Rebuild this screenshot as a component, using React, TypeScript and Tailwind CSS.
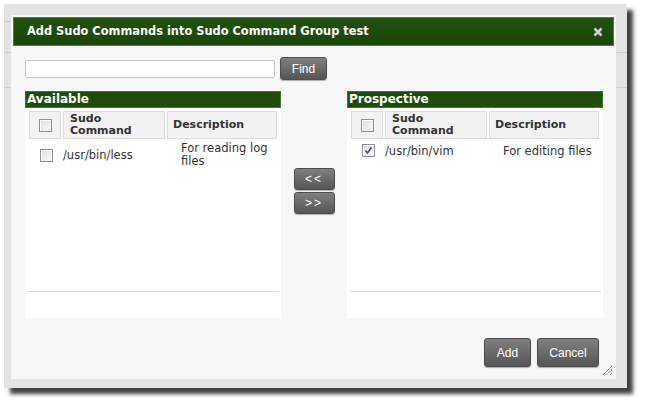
import React from "react";

const FONT = { fontFamily: '"DejaVu Sans", Verdana, sans-serif' };
const BTN_FONT = { fontFamily: '"Liberation Sans", Arial, sans-serif' };

function Checkbox({ checked = false }: { checked?: boolean }) {
  return (
    <div className="relative w-[13px] h-[13px] border border-[#8f8f8f] bg-gradient-to-br from-[#dcdcdc] to-[#fbfbfb] shadow-[inset_1px_1px_0_#fff]">
      {checked && (
        <svg viewBox="0 0 11 11" className="absolute left-0 top-0 w-[11px] h-[11px]">
          <path d="M2.5 5.5 L4.5 8 L8.5 2.5" fill="none" stroke="#3d4f8c" strokeWidth="1.6" />
        </svg>
      )}
    </div>
  );
}

function GrayButton({ children, className = "" }: { children: React.ReactNode; className?: string }) {
  return (
    <button
      style={BTN_FONT}
      className={
        "flex items-center justify-center rounded-[3px] border border-[#4e4e4e] bg-gradient-to-b from-[#7f7f7f] to-[#565656] text-white text-[12px] shadow-[0_1px_1px_rgba(0,0,0,0.3)] " +
        className
      }
    >
      {children}
    </button>
  );
}

function Panel({
  title,
  command,
  description,
  checked,
  boxPad,
  textPad,
  descPad,
}: {
  title: string;
  command: string;
  description: React.ReactNode;
  checked: boolean;
  boxPad: string;
  textPad: string;
  descPad: string;
}) {
  return (
    <div className="w-[256px] h-[227px] flex flex-col">
      <div className="h-[17px] bg-[#1f4b0c] border border-[#3c7d1f] text-white font-bold text-[12px] leading-[15px] pl-[1px]">
        {title}
      </div>
      <div className="flex-1 bg-white flex flex-col">
        <div className="flex gap-[2px] px-[4px] pt-[3px] h-[31px]">
          <div className="w-[32px] h-[28px] bg-[#f2f2f2] border border-[#dcdcdc] flex items-center justify-center">
            <Checkbox />
          </div>
          <div className="w-[102px] h-[28px] bg-[#f2f2f2] border border-[#dcdcdc] flex items-center pl-[6px] font-bold text-[11px] leading-[12px] text-[#333]">
            Sudo
            <br />
            Command
          </div>
          <div className="flex-1 h-[28px] bg-[#f2f2f2] border border-[#dcdcdc] flex items-center pl-[5px] font-bold text-[11px] text-[#333]">
            Description
          </div>
        </div>
        <div className="flex items-start pt-[3px] h-[152px] text-[11.5px] text-[#333]">
          <div className={"w-[38px] pl-[15px] " + boxPad}>
            <Checkbox checked={checked} />
          </div>
          <div className={"w-[118px] leading-[13px] " + textPad}>{command}</div>
          <div className={"flex-1 leading-[13px] " + descPad}>{description}</div>
        </div>
        <div className="mx-[2px] border-t border-[#dcdcdc] flex-1" />
      </div>
    </div>
  );
}

export default function App() {
  return (
    <div style={FONT} className="w-[645px] h-[406px] bg-white overflow-hidden relative">
      <div className="relative ml-[4px] mt-[4px] w-[623px] h-[384px] bg-[#e3e3e3] pl-[7px] pt-[11px] shadow-[6px_6px_4px_rgba(0,0,0,0.75)]">
        <div className="absolute left-0 top-[17px] w-[7px] border-t border-[#cfcfcf]" />
        <div className="absolute left-0 top-[48px] w-[7px] border-t border-[#cfcfcf]" />
        <div className="absolute left-0 top-[83px] w-[7px] border-t border-[#cfcfcf]" />
        <div className="absolute right-0 top-[48px] w-[11px] border-t border-[#cfcfcf]" />
        <div className="absolute right-0 top-[83px] w-[11px] border-t border-[#cfcfcf]" />
        <div className="relative w-[605px] h-[364px] bg-[#f7f7f7] p-[2px] flex flex-col">
          <div className="h-[29px] bg-gradient-to-b from-[#22500e] to-[#1b4509] border border-[#3f8f20] flex items-center justify-between pl-[13px] pr-[10px]">
            <span className="text-white font-bold text-[11.4px]">Add Sudo Commands into Sudo Command Group test</span>
            <svg viewBox="0 0 10 10" className="w-[10px] h-[10px]">
              <path d="M1.5 1.5 L8.5 8.5 M8.5 1.5 L1.5 8.5" stroke="#cfcfcf" strokeWidth="2.6" />
            </svg>
          </div>
          <div className="flex items-center gap-[5px] pl-[12px] mt-[11px] h-[23px]">
            <div className="w-[250px] h-[18px] bg-white border border-[#c8c8c8] rounded-[2px]" />
            <GrayButton className="w-[47px] h-[23px]">Find</GrayButton>
          </div>
          <div className="flex pl-[12px] mt-[11px]">
            <Panel
              title="Available"
              command="/usr/bin/less"
              checked={false}
              boxPad="pt-[7px]"
              textPad="pt-[7px]"
              descPad="pt-0"
              description={
                <>
                  For reading log
                  <br />
                  files
                </>
              }
            />
            <div className="w-[66px] flex flex-col items-center pt-[77px] gap-[2px]">
              <GrayButton className="w-[41px] h-[22px] text-[#e8f0ff] tracking-[2px]">&lt;&lt;</GrayButton>
              <GrayButton className="w-[41px] h-[22px] text-[#e8f0ff] tracking-[2px]">&gt;&gt;</GrayButton>
            </div>
            <Panel
              title="Prospective"
              command="/usr/bin/vim"
              checked={true}
              boxPad="pt-[2px]"
              textPad="pt-[3px]"
              descPad="pt-[3px]"
              description="For editing files"
            />
          </div>
          <div className="flex justify-end gap-[6px] pr-[15px] mt-[20px]">
            <GrayButton className="w-[47px] h-[29px]">Add</GrayButton>
            <GrayButton className="w-[62px] h-[29px]">Cancel</GrayButton>
          </div>
          <svg viewBox="0 0 12 12" className="absolute right-[3px] bottom-[3px] w-[12px] h-[12px]">
            <path d="M11 2 L2 11 M11 5.5 L5.5 11 M11 9 L9 11" stroke="#444" strokeWidth="1" strokeDasharray="1 1" />
          </svg>
        </div>
      </div>
    </div>
  );
}
